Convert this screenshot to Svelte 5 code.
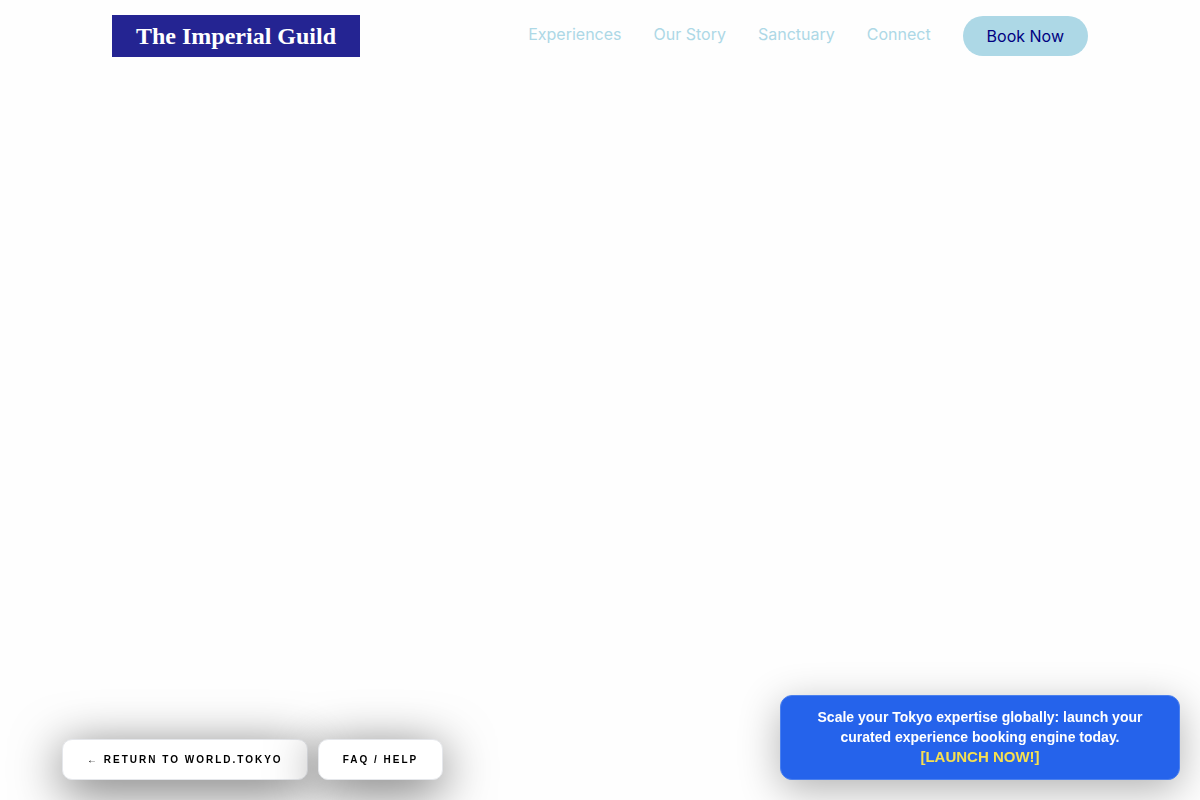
<script>
    const links = [
        { label: 'Experiences', href: '#experiences' },
        { label: 'Our Story', href: '#story' },
        { label: 'Sanctuary', href: '#sanctuary' },
        { label: 'Connect', href: '#connect' }
    ];
</script>

<header class="site-header">
    <div class="header-inner">
        <a class="logo" href="#top">The Imperial Guild</a>
        <nav class="main-nav">
            {#each links as link}
                <a class="nav-link" href={link.href}>{link.label}</a>
            {/each}
            <button class="book-btn" type="button">Book Now</button>
        </nav>
    </div>
</header>

<footer class="floating-bar">
    <div class="quick-links">
        <a class="quick-link" href="#world">← Return to World.Tokyo</a>
        <a class="quick-link" href="#faq">FAQ / Help</a>
    </div>
    <a class="promo" href="#launch">
        Scale your Tokyo expertise globally: launch your curated experience booking engine today.
        <span class="promo-cta">[LAUNCH NOW!]</span>
    </a>
</footer>

<style>
    :global(body) {
        background: #fefefe;
        font-family: Inter, sans-serif;
    }

    a {
        text-decoration: none;
    }

    /* Header */
    .header-inner {
        box-sizing: border-box;
        max-width: 1024px;
        margin: 0 auto;
        padding: 15px 24px;
        display: flex;
        justify-content: space-between;
        align-items: center;
    }

    .logo {
        padding: 8px 24px;
        background: #242492;
        color: #fff;
        font: bold 24px/26px "Liberation Serif", serif;
        white-space: nowrap;
    }

    .main-nav {
        display: flex;
        align-items: center;
        gap: 32px;
    }

    .nav-link {
        padding-bottom: 4px;
        color: #add8e6;
        font-size: 16px;
        line-height: 24px;
        white-space: nowrap;
    }

    .book-btn {
        padding: 8px 24px;
        border: none;
        border-radius: 20px;
        background: #add8e6;
        color: #000080;
        font: 16px/24px Inter, sans-serif;
        white-space: nowrap;
        cursor: pointer;
    }

    /* Bottom bar */
    .floating-bar {
        box-sizing: border-box;
        position: fixed;
        left: 0;
        right: 0;
        bottom: 0;
        padding: 0 20px 20px 62px;
        display: flex;
        justify-content: space-between;
        align-items: flex-end;
        gap: 20px;
        font-family: "Liberation Sans", Arial, sans-serif;
        font-weight: bold;
    }

    .quick-links {
        display: flex;
        gap: 10px;
    }

    .quick-link {
        padding: 12px 24px;
        border: 1px solid #e5e7eb;
        border-radius: 10px;
        background: #fff;
        color: #000;
        font-size: 10px;
        line-height: 15px;
        letter-spacing: 2px;
        text-transform: uppercase;
        white-space: nowrap;
        box-shadow: 0 10px 50px rgba(0, 0, 0, 0.6);
    }

    .promo {
        box-sizing: border-box;
        width: 400px;
        padding: 11px 24px 12px;
        border: 1px solid #4b80ee;
        border-radius: 12px;
        background: #2563eb;
        color: #fff;
        font-size: 14px;
        line-height: 20px;
        text-align: center;
        box-shadow: 0 10px 40px rgba(0, 0, 0, 0.3);
    }

    .promo-cta {
        display: block;
        color: #f7e04f;
        font-size: 15px;
    }
</style>
